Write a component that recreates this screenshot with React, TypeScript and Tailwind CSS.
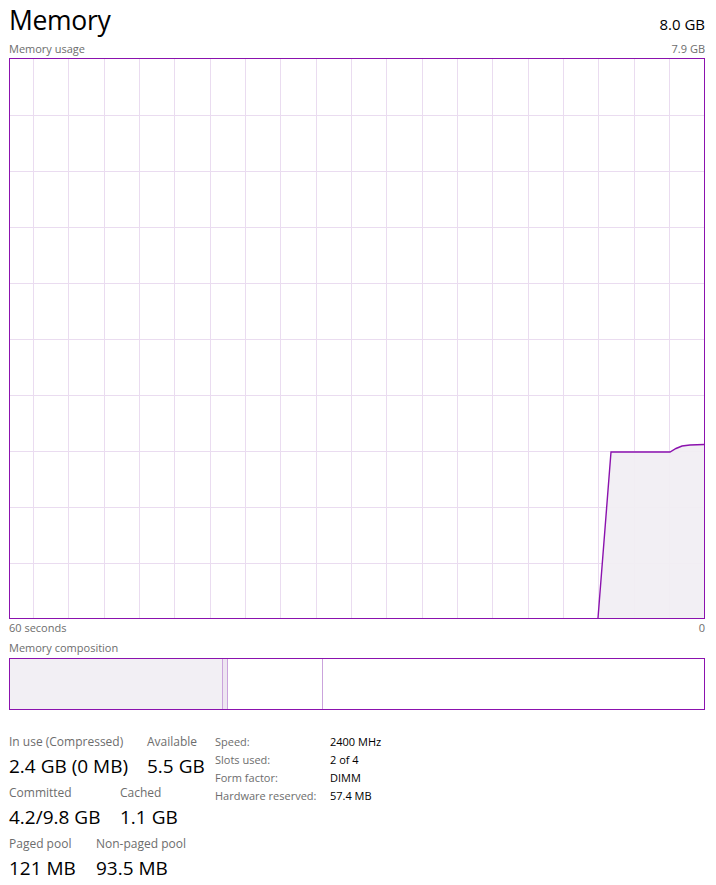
import type React from "react";

const purple = "#8b12ae";

const vLines = Array.from({ length: 19 }, (_, i) => 23 + i * 35.33);
const hLines = Array.from({ length: 9 }, (_, i) => 56 + i * 56);

const usagePoints: [number, number][] = [
  [588, 559],
  [601, 393],
  [660, 393],
  [666, 389.5],
  [672, 387],
  [680, 386],
  [694, 385.5],
];

const UsageChart: React.FC = () => {
  const line = usagePoints.map(([x, y]) => `${x},${y}`).join(" ");
  const area = `${line} 694,559`;
  return (
    <div className="w-[696px] h-[561px] border border-[#8b12ae] bg-white">
      <svg width="694" height="559" viewBox="0 0 694 559" className="block">
        {vLines.map((x, i) => (
          <line key={"v" + i} x1={Math.round(x) + 0.5} x2={Math.round(x) + 0.5} y1={0} y2={559} stroke="#eadcf0" strokeWidth={1} />
        ))}
        {hLines.map((y, i) => (
          <line key={"h" + i} x1={0} x2={694} y1={y + 0.5} y2={y + 0.5} stroke="#eadcf0" strokeWidth={1} />
        ))}
        <polygon points={area} fill="#f1eef3" fillOpacity={0.92} />
        <polyline points={line} fill="none" stroke={purple} strokeWidth={1.4} />
      </svg>
    </div>
  );
};

const CompositionBar: React.FC = () => {
  return (
    <div className="w-[696px] h-[52px] border border-[#8b12ae] flex">
      <div className="w-[212px] h-full bg-[#f2eff4]" />
      <div className="w-px h-full bg-[#caa3dc]" />
      <div className="w-[4px] h-full bg-[#eee6f1]" />
      <div className="w-px h-full bg-[#caa3dc]" />
      <div className="w-[94px] h-full bg-white" />
      <div className="w-px h-full bg-[#caa3dc]" />
      <div className="flex-1 h-full bg-white" />
    </div>
  );
};

const Stat: React.FC<{ label: string; value: string; w: string }> = ({ label, value, w }) => {
  return (
    <div className={"flex flex-col " + w}>
      <span className="text-[12px] leading-[18px] text-[#6d6d6d] whitespace-nowrap">{label}</span>
      <span className="text-[19px] leading-[30px] text-black whitespace-nowrap">{value}</span>
    </div>
  );
};

const specs = [
  ["Speed:", "2400 MHz"],
  ["Slots used:", "2 of 4"],
  ["Form factor:", "DIMM"],
  ["Hardware reserved:", "57.4 MB"],
];

const App: React.FC = () => {
  return (
    <div
      className="w-[716px] h-[885px] bg-white pl-[9px] overflow-hidden"
      style={{ fontFamily: '"Open Sans", "Noto Sans", sans-serif' }}
    >
      {/* header */}
      <div className="w-[696px] h-[42px] flex flex-row justify-between items-baseline">
        <span className="text-[26.5px] leading-[40px] text-black tracking-[-0.3px]">Memory</span>
        <span className="text-[15px] text-black">8.0 GB</span>
      </div>
      <div className="w-[696px] h-[16px] flex flex-row justify-between items-start">
        <span className="text-[11px] leading-[14px] text-[#6d6d6d]">Memory usage</span>
        <span className="text-[11px] leading-[14px] text-[#6d6d6d]">7.9 GB</span>
      </div>

      <UsageChart />

      <div className="w-[696px] h-[19px] flex flex-row justify-between items-center">
        <span className="text-[11px] leading-[16px] text-[#6d6d6d] -mt-[1px]">60 seconds</span>
        <span className="text-[11px] leading-[16px] text-[#6d6d6d] -mt-[1px]">0</span>
      </div>
      <div className="w-[696px] h-[20px] flex flex-row items-center">
        <span className="text-[11px] leading-[16px] text-[#6d6d6d] -mt-[1px]">Memory composition</span>
      </div>

      <CompositionBar />

      {/* stats */}
      <div className="flex flex-row mt-[23px]">
        <div className="w-[206px] flex flex-col">
          <div className="flex flex-row mb-[3px]">
            <Stat label="In use (Compressed)" value="2.4 GB (0 MB)" w="w-[138px]" />
            <Stat label="Available" value="5.5 GB" w="w-[60px]" />
          </div>
          <div className="flex flex-row mb-[3px]">
            <Stat label="Committed" value="4.2/9.8 GB" w="w-[111px]" />
            <Stat label="Cached" value="1.1 GB" w="w-[60px]" />
          </div>
          <div className="flex flex-row">
            <Stat label="Paged pool" value="121 MB" w="w-[87px]" />
            <Stat label="Non-paged pool" value="93.5 MB" w="w-[100px]" />
          </div>
        </div>
        <div className="flex flex-col">
          {specs.map(([k, v]) => (
            <div key={k} className="flex flex-row h-[18px] items-center">
              <span className="w-[115px] text-[11px] text-[#6d6d6d] whitespace-nowrap">{k}</span>
              <span className="text-[11px] text-black whitespace-nowrap">{v}</span>
            </div>
          ))}
        </div>
      </div>
    </div>
  );
};

export default App;
